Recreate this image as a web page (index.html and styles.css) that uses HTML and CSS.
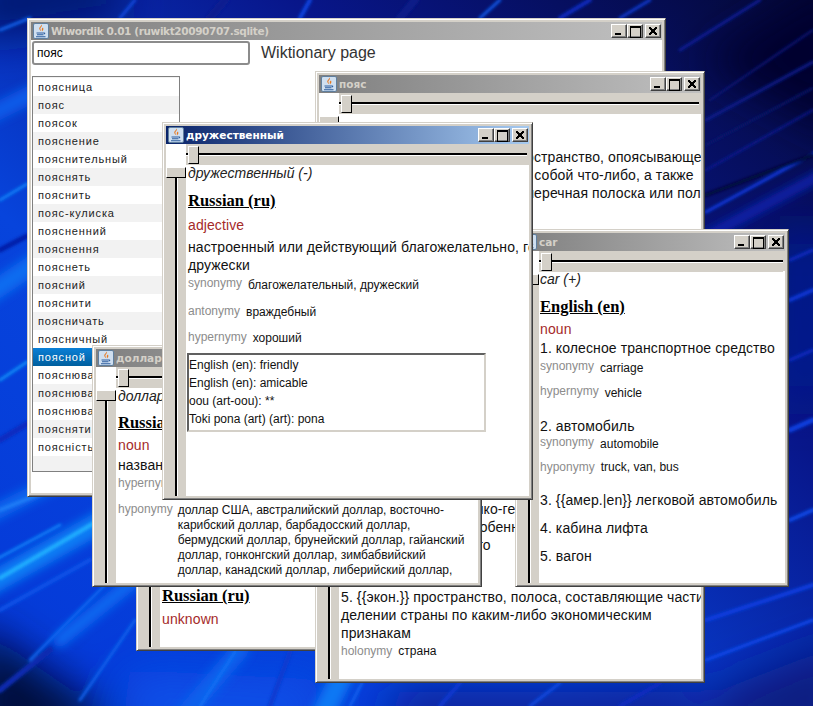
FILE: index.html
```html
<!DOCTYPE html>
<html lang="ru">
<head>
<meta charset="utf-8">
<title>Wiwordik</title>
<link rel="stylesheet" href="styles.css">
</head>
<body>
<svg class="defs" width="0" height="0">
  <symbol id="java" viewBox="0 0 16 16">
    <rect x="0.5" y="0.5" width="15" height="15" rx="1.5" fill="#cfdff0" stroke="#5f7f9f"/>
    <path d="M8.5 1.5c1.500 2-2 3-1 5 .4.800 1 1.200 1 1.800-1-.6-2.600-1.600-2.200-3.200.3-1.300 2-2 2.200-3.600z" fill="#e8761a"/>
    <path d="M10 4.500c-1 .8-1.600 1.500-1 2.600.2.400.3.800 0 1.300 1.500-1 1.600-2.400 1-3.900z" fill="#e8761a"/>
    <path d="M3.500 9.500h7.500v1h-7.500zM4 11.300h6.500v1h-6.500zM11 9.500c1.500-.3 2 1.400 0 2z M3 13.200h9.500v1h-9.500z" fill="#2f5f9f"/>
  </symbol>
</svg>

<div class="desktop">
  <svg class="wallpaper" viewBox="0 0 813 706" preserveAspectRatio="none">
    <defs>
      <linearGradient id="bg" x1="0" y1="1" x2="1" y2="0">
        <stop offset="0" stop-color="#0438d8"/>
        <stop offset="0.35" stop-color="#0744dc"/>
        <stop offset="0.68" stop-color="#08168a"/>
        <stop offset="1" stop-color="#040838"/>
      </linearGradient>
      <filter id="b1"><feGaussianBlur stdDeviation="1.600"/></filter>
      <filter id="b2"><feGaussianBlur stdDeviation="5"/></filter>
      <filter id="b3"><feGaussianBlur stdDeviation="22"/></filter>
    </defs>
    <rect width="813" height="706" fill="url(#bg)"/>
    <g filter="url(#b3)">
      <path d="M-30 620L130 730L-30 760z" fill="#02083a"/>
      <path d="M700 60L850 -30V140z" fill="#03052e"/>
      <path d="M720 690L850 640V740H700z" fill="#071a80"/>
      <path d="M-30 -30H120V20L-30 40z" fill="#061470"/>
      <path d="M130 670L330 680L300 740H120z" fill="#0a50e8"/>
      <path d="M400 690H700V730H380z" fill="#0a1c8c"/>
      <path d="M780 230H830V400H780z" fill="#061a90"/>
    </g>
    <g filter="url(#b2)" fill="none" stroke-linecap="round">
      <path d="M-20 590L140 500" stroke="#0b7cf4" stroke-width="22"/>
      <path d="M-20 520L60 480" stroke="#0766ee" stroke-width="16"/>
      <path d="M60 640L160 560" stroke="#0a68f0" stroke-width="14"/>
      <path d="M-20 300L40 260" stroke="#0a6cf0" stroke-width="20"/>
      <path d="M-20 120L40 90" stroke="#0a5ae8" stroke-width="18"/>
      <path d="M320 720L350 660" stroke="#1078f4" stroke-width="22"/>
      <path d="M180 720L240 650" stroke="#0a60ec" stroke-width="18"/>
      <path d="M700 240L830 170" stroke="#0a22b0" stroke-width="10"/>
    </g>
    <g filter="url(#b1)" fill="none" stroke-linecap="round">
      <path d="M0 578L96 522" stroke="#20b0ff" stroke-width="4"/>
      <path d="M-5 560L60 525" stroke="#0c80f8" stroke-width="3"/>
      <path d="M0 610L90 560" stroke="#0c52e8" stroke-width="4"/>
      <path d="M30 660L105 585" stroke="#0a68f0" stroke-width="3"/>
      <path d="M0 510L50 490" stroke="#2080f8" stroke-width="3"/>
      <path d="M80 700L135 620" stroke="#0a62ec" stroke-width="3"/>
      <path d="M0 690L50 650" stroke="#0c2cb0" stroke-width="6"/>
      <path d="M0 30L30 18" stroke="#1060e8" stroke-width="3"/>
      <path d="M0 200L27 184" stroke="#0c80f8" stroke-width="3"/>
      <path d="M0 250L27 236" stroke="#041fa8" stroke-width="5"/>
      <path d="M0 380L27 362" stroke="#0e8cf8" stroke-width="3"/>
      <path d="M0 440L27 424" stroke="#0a2cc0" stroke-width="6"/>
      <path d="M120 18L135 0" stroke="#0e46dc" stroke-width="3"/>
      <path d="M210 18L225 0" stroke="#0a1c90" stroke-width="8"/>
      <path d="M300 18L310 0" stroke="#0a44e0" stroke-width="4"/>
      <path d="M400 18L415 0" stroke="#081a88" stroke-width="8"/>
      <path d="M480 18L500 0" stroke="#0a5aec" stroke-width="3"/>
      <path d="M560 18L590 0" stroke="#0a2cc0" stroke-width="4"/>
      <path d="M620 18L650 0" stroke="#0a3ad0" stroke-width="3"/>
      <path d="M706 212L820 150" stroke="#0d3ae0" stroke-width="3"/>
      <path d="M706 120L813 62" stroke="#0a1c90" stroke-width="3"/>
      <path d="M680 50L760 0" stroke="#0a1e98" stroke-width="3"/>
      <path d="M710 100L813 30" stroke="#0a1880" stroke-width="2"/>
      <path d="M706 170L813 110" stroke="#0a1f9c" stroke-width="2"/>
      <path d="M706 195L813 155" stroke="#03073a" stroke-width="4"/>
      <path d="M706 145L813 88" stroke="#081470" stroke-width="2"/>
      <path d="M790 260L813 250" stroke="#0a2cc0" stroke-width="3"/>
      <path d="M790 300L813 290" stroke="#0a38d8" stroke-width="4"/>
      <path d="M790 360L813 350" stroke="#0a2cc0" stroke-width="3"/>
      <path d="M790 430L813 420" stroke="#0a40e0" stroke-width="5"/>
      <path d="M790 520L813 510" stroke="#0a4ae8" stroke-width="4"/>
      <path d="M706 620L813 585" stroke="#0a3ee0" stroke-width="4"/>
      <path d="M706 660L813 620" stroke="#0a48ec" stroke-width="3"/>
      <path d="M350 706L362 683" stroke="#0c60ee" stroke-width="3"/>
      <path d="M440 706L460 683" stroke="#0a38d0" stroke-width="4"/>
      <path d="M530 706L560 683" stroke="#0a48e0" stroke-width="3"/>
      <path d="M620 706L660 683" stroke="#0a2cc0" stroke-width="4"/>
      <path d="M200 706L235 652" stroke="#0c70f4" stroke-width="3"/>
      <path d="M270 706L290 652" stroke="#0a3ad0" stroke-width="5"/>
    </g>
  </svg>

  <section class="win win-main">
    <header class="title idle">
      <svg class="icon"><use href="#java"/></svg>
      <span class="title-text">Wiwordik 0.01 (ruwikt20090707.sqlite)</span>
      <div class="btns"><span class="btn min"></span><span class="btn max"></span><span class="btn close"></span></div>
    </header>
    <div class="main-body">
      <div class="search-row">
        <div class="search">пояс</div>
        <div class="wikt">Wiktionary page</div>
      </div>
      <ul class="list">
        <li>поясница</li><li>пояс</li><li>поясок</li><li>пояснение</li><li>пояснительный</li>
        <li>пояснять</li><li>пояснить</li><li>пояс-кулиска</li><li>поясненний</li><li>пояснення</li>
        <li>пояснеть</li><li>поясний</li><li>пояснити</li><li>поясничать</li><li>поясничный</li>
        <li class="sel">поясной</li><li>пояснювальний</li><li>пояснювання</li><li>пояснювати</li><li>поясняти</li>
        <li>поясність</li>
      </ul>
    </div>
  </section>

  <section class="win win-unknown">
    <header class="title idle">
      <svg class="icon"><use href="#java"/></svg>
      <span class="title-text">пояс</span>
      <div class="btns"><span class="btn min"></span><span class="btn max"></span><span class="btn close"></span></div>
    </header>
    <div class="hbar"><i class="corner"></i><div class="track"><b class="thumb"></b></div></div>
    <div class="frame">
      <div class="vbar"><b class="vthumb"></b></div>
      <div class="page">
        <p class="word">пояс (-)</p>
        <h2 class="lang">Russian (ru)</h2>
        <p class="pos">unknown</p>
      </div>
    </div>
  </section>

  <section class="win win-poyas">
    <header class="title idle">
      <svg class="icon"><use href="#java"/></svg>
      <span class="title-text">пояс</span>
      <div class="btns"><span class="btn min"></span><span class="btn max"></span><span class="btn close"></span></div>
    </header>
    <div class="hbar"><i class="corner"></i><div class="track"><b class="thumb"></b></div></div>
    <div class="frame">
      <div class="vbar"><b class="vthumb"></b></div>
      <div class="page page-poyas">
        <p class="def shift">2. {{переносн.}} полоса, пространство, опоясывающее</p>
        <p class="def shift">какая-нибудь, окружающая собой что-либо, а также</p>
        <p class="def shift">цветная и какая-нибудь поперечная полоска или полоса</p>
        <p class="def gap-poyas">4. {{геогр.}} в климатико-географическая</p>
        <p class="def">областью с рядом особенностями</p>
        <p class="def">климата и природы, то</p>
        <p class="def gap-econ">5. {{экон.}} пространство, полоса, составляющие части</p>
        <p class="def">делении страны по каким-либо экономическим</p>
        <p class="def">признакам</p>
        <div class="rel rel-holo"><span class="rel-name">holonymy</span><span class="rel-val">страна</span></div>
      </div>
    </div>
  </section>

  <section class="win win-car">
    <header class="title idle">
      <svg class="icon"><use href="#java"/></svg>
      <span class="title-text">car</span>
      <div class="btns"><span class="btn min"></span><span class="btn max"></span><span class="btn close"></span></div>
    </header>
    <div class="hbar"><i class="corner"></i><div class="track"><b class="thumb"></b></div></div>
    <div class="frame">
      <div class="vbar"><b class="vthumb"></b></div>
      <div class="page">
        <p class="word">car (+)</p>
        <h2 class="lang">English (en)</h2>
        <p class="pos">noun</p>
        <p class="def">1. колесное транспортное средство</p>
        <div class="rel car-syn1"><span class="rel-name">synonymy</span><span class="rel-val">carriage</span></div>
        <div class="rel car-hyper"><span class="rel-name">hypernymy</span><span class="rel-val">vehicle</span></div>
        <p class="def car-two">2. автомобиль</p>
        <div class="rel car-syn2"><span class="rel-name">synonymy</span><span class="rel-val">automobile</span></div>
        <div class="rel car-hypo"><span class="rel-name">hyponymy</span><span class="rel-val">truck, van, bus</span></div>
        <p class="def car-three">3. {{амер.|en}} легковой автомобиль</p>
        <p class="def car-next">4. кабина лифта</p>
        <p class="def car-next">5. вагон</p>
      </div>
    </div>
  </section>

  <section class="win win-dollar">
    <header class="title idle">
      <svg class="icon"><use href="#java"/></svg>
      <span class="title-text">доллар</span>
      <div class="btns"><span class="btn min"></span><span class="btn max"></span><span class="btn close"></span></div>
    </header>
    <div class="hbar"><i class="corner"></i><div class="track"><b class="thumb"></b></div></div>
    <div class="frame">
      <div class="vbar"><b class="vthumb"></b></div>
      <div class="page">
        <p class="word">доллар (-)</p>
        <h2 class="lang">Russian (ru)</h2>
        <p class="pos">noun</p>
        <p class="def">название денежных единиц</p>
        <div class="rel"><span class="rel-name">hypernymy</span><span class="rel-val">валюта</span></div>
        <div class="rel rel-hypo"><span class="rel-name">hyponymy</span><span class="rel-val rel-long">доллар США, австралийский доллар, восточно-<br>карибский доллар, барбадосский доллар,<br>бермудский доллар, брунейский доллар, гайанский<br>доллар, гонконгский доллар, зимбабвийский<br>доллар, канадский доллар, либерийский доллар,</span></div>
      </div>
    </div>
  </section>

  <section class="win win-druzh">
    <header class="title active">
      <svg class="icon"><use href="#java"/></svg>
      <span class="title-text">дружественный</span>
      <div class="btns"><span class="btn min"></span><span class="btn max"></span><span class="btn close"></span></div>
    </header>
    <div class="hbar"><i class="corner"></i><div class="track"><b class="thumb"></b></div></div>
    <div class="frame">
      <div class="vbar"><b class="vthumb"></b></div>
      <div class="page">
        <p class="word">дружественный (-)</p>
        <h2 class="lang">Russian (ru)</h2>
        <p class="pos">adjective</p>
        <p class="def">настроенный или действующий благожелательно, готовый</p>
        <p class="def">дружески</p>
        <div class="rel"><span class="rel-name">synonymy</span><span class="rel-val">благожелательный, дружеский</span></div>
        <div class="rel dr-ant"><span class="rel-name">antonymy</span><span class="rel-val">враждебный</span></div>
        <div class="rel dr-hyper"><span class="rel-name">hypernymy</span><span class="rel-val">хороший</span></div>
        <div class="trans">
          <div>English (en): friendly</div>
          <div>English (en): amicable</div>
          <div>oou (art-oou): **</div>
          <div>Toki pona (art) (art): pona</div>
        </div>
      </div>
    </div>
  </section>
</div>
</body>
</html>
```
FILE: styles.css
```css
* { box-sizing: border-box; }
html, body { margin: 0; padding: 0; }
body { width: 813px; height: 706px; overflow: hidden; font-family: "Liberation Sans", Arial, sans-serif; }
.defs { position: absolute; }
.desktop { position: relative; width: 813px; height: 706px; overflow: hidden; background: #0a2cc0; }
.wallpaper { position: absolute; left: 0; top: 0; width: 813px; height: 706px; }

.win {
  position: absolute;
  display: flex;
  flex-direction: column;
  padding: 3px;
  background: #d4d0c8;
  border: 1px solid;
  border-color: #d4d0c8 #404040 #404040 #d4d0c8;
  box-shadow: inset 1px 1px #fff, inset -1px -1px #808080;
  overflow: hidden;
}
.win-main { left: 27px; top: 18px; width: 639px; height: 479px; }
.win-unknown { left: 136px; top: 517px; width: 390px; height: 134px; }
.win-poyas { left: 315px; top: 71px; width: 390px; height: 612px; }
.win-car { left: 515px; top: 229px; width: 274px; height: 358px; }
.win-dollar { left: 92px; top: 345px; width: 390px; height: 242px; }
.win-druzh { left: 162px; top: 122px; width: 371px; height: 378px; }

.title {
  flex: none;
  height: 18px;
  display: flex;
  align-items: center;
  padding: 0 1px 0 2px;
  font: bold 10.5px "DejaVu Sans", sans-serif;
}
.title.idle { background: linear-gradient(90deg, #808080, #c0c0c0); color: #d4d0c8; }
.title.active { background: linear-gradient(90deg, #0a246a, #a6caf0); color: #fff; }
.win-main .title-text { letter-spacing: -0.38px; }
.icon { width: 16px; height: 16px; flex: none; margin-right: 2px; }
.title-text { flex: 1; white-space: nowrap; overflow: hidden; }
.btns { display: flex; flex: none; }
.btn {
  position: relative;
  width: 16px;
  height: 14px;
  background: #d4d0c8;
  border: 1px solid;
  border-color: #fff #404040 #404040 #fff;
  box-shadow: inset -1px -1px #808080;
}
.btn.close { margin-left: 2px; }
.btn.min::after { content: ""; position: absolute; left: 3px; bottom: 2px; width: 6px; height: 2px; background: #000; }
.btn.max::after { content: ""; position: absolute; left: 2px; top: 1px; width: 9px; height: 9px; border: 1px solid #000; border-top-width: 2px; }
.btn.close::after {
  content: "";
  position: absolute;
  left: 3px;
  top: 2px;
  width: 8px;
  height: 8px;
  background:
    linear-gradient(45deg, transparent 43%, #000 43%, #000 57%, transparent 57%),
    linear-gradient(-45deg, transparent 43%, #000 43%, #000 57%, transparent 57%);
}

.main-body { flex: 1; background: #fff; padding: 1px 1px 21px 1px; display: flex; flex-direction: column; min-height: 0; }
.search-row { display: flex; align-items: center; flex: none; height: 24px; gap: 11px; }
.search {
  width: 218px;
  height: 24px;
  border: 2px solid #8c8c8c;
  border-radius: 3px;
  padding: 0 3px;
  font-size: 12px;
  line-height: 20px;
  color: #000;
}
.wikt { font-size: 16px; color: #333; }
.list {
  flex: 1;
  list-style: none;
  margin: 11px 0 0;
  padding: 1px 0 0;
  width: 148px;
  border: 1px solid #808080;
  background: #f2f2f2;
  overflow: hidden;
}
.list li {
  height: 18px;
  padding-left: 5px;
  background: #fff;
  font-size: 11px;
  line-height: 18px;
  letter-spacing: 0.85px;
  color: #222;
  white-space: nowrap;
}
.list li:nth-child(even) { background: #f2f2f2; }
.list li.sel { background: linear-gradient(180deg, #0a7fd6, #005f9e); color: #fff; }

.hbar { flex: none; height: 21px; display: flex; }
.corner { flex: none; width: 20px; background: #fff; }
.track {
  flex: 1;
  position: relative;
  background: linear-gradient(180deg, #d4d0c8 9px, #000 9px, #000 11px, #fff 11px, #fff 12px, #d4d0c8 12px);
  margin-right: 2px;
}
.thumb {
  position: absolute;
  left: 2px;
  top: 2px;
  width: 11px;
  height: 18px;
  background: #d4d0c8;
  border: 1px solid;
  border-color: #fff #000 #000 #fff;
}
.frame { flex: 1; display: flex; min-height: 0; background: #fff; margin-right: 0; }
.vbar {
  flex: none;
  position: relative;
  width: 20px;
  background: linear-gradient(90deg, #d4d0c8 9px, #000 9px, #000 11px, #fff 11px, #fff 12px, #d4d0c8 12px);
  border-top: 2px solid #fff;
}
.vthumb {
  position: absolute;
  left: 0;
  top: 0;
  width: 20px;
  height: 11px;
  background: #d4d0c8;
  border: 1px solid;
  border-color: #fff #000 #000 #fff;
}
.page { flex: 1; min-width: 0; overflow: hidden; padding-left: 2px; background: #fff; color: #000; }
p { margin: 0; }
.word { font-size: 14px; font-style: italic; line-height: 16px; color: #222; white-space: nowrap; }
.lang {
  margin: 10px 0 0;
  font: bold 16.5px/20px "Liberation Serif", serif;
  text-decoration: underline;
  color: #000;
}
.pos { margin: 5px 0 4px; font-size: 14px; line-height: 18px; color: #a52a2a; letter-spacing: 0.1px; }
.def { font-size: 14px; line-height: 18px; white-space: nowrap; color: #111; letter-spacing: 0.1px; }
.rel { display: flex; align-items: flex-start; gap: 6px; font-size: 12px; line-height: 15px; height: 15px; white-space: nowrap; margin-top: 2px; }
.rel-name { color: #8c8c8c; }
.rel-val { color: #111; position: relative; top: 2px; }
.dr-ant { margin-top: 13px; }
.dr-ant .rel-val { top: 1px; }
.dr-hyper { margin-top: 11px; }
.dr-hyper .rel-val { top: 1px; }
.trans {
  width: 299px;
  height: 79px;
  margin: 8px 0 0 -1px;
  padding: 1px 0 0 0;
  border: 2px solid;
  border-color: #606060 #d4d0c8 #d4d0c8 #606060;
  font-size: 12px;
  line-height: 18px;
  color: #111;
}

.win-unknown .pos { margin-top: 4px; }

.win-dollar .lang { margin-top: 9px; }
.win-dollar .pos { margin: 3px 0 2px; }
.win-dollar .rel-val { top: 1px; }
.win-dollar .rel { gap: 5px; }
.rel-hypo { margin-top: 11px; }
.rel-long { line-height: 15px; }

.page-poyas { padding-top: 34px; }
.shift { text-indent: 10px; }
.gap-poyas { margin-top: 298px; }
.gap-econ { margin-top: 34px; }
.rel-holo { margin-top: 2px; }
.rel-holo .rel-val { top: 0; }

.win-car .page { margin-top: -1px; margin-left: -1px; }
.win-car .pos { margin: 3px 0 1px; }
.car-syn1 { margin-top: 2px; }
.car-hyper { margin-top: 10px; }
.car-two { margin-top: 18px; }
.car-syn2 { margin-top: 0; }
.car-hypo { margin-top: 10px; }
.car-hypo .rel-val { top: 0; }
.car-three { margin-top: 16px; }
.car-next { margin-top: 10px; }
```
